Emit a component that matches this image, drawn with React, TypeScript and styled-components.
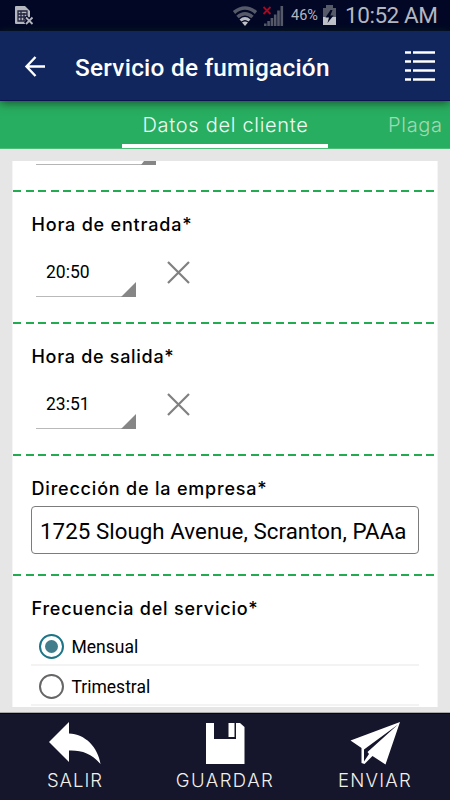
import React from "react";
import styled, { createGlobalStyle } from "styled-components";

const Global = createGlobalStyle`
  * { box-sizing: border-box; }
  body { margin: 0; background: #e6e6e6; overflow: hidden; }
  svg { display: block; flex: none; }
`;

const ui = `Roboto, "Liberation Sans", sans-serif`;
const brand = `Inter, Lato, sans-serif`;

const Screen = styled.div`
  width: 450px;
  height: 800px;
  display: flex;
  flex-direction: column;
  overflow: hidden;
  background: #e6e6e6;
  font-family: ${ui};
  color: #000;
`;

const StatusBar = styled.header`
  height: 31px;
  flex: none;
  display: flex;
  align-items: center;
  padding: 0 12px 0 14px;
  background: #010724;
  color: #b5b7c0;
`;

const Spacer = styled.div`
  flex: 1;
`;

const Percent = styled.span`
  width: 31px;
  margin-left: 7px;
  font-size: 14.5px;
  line-height: 33px;
  white-space: nowrap;
`;

const Clock = styled.span`
  width: 93px;
  margin-left: 8px;
  font-size: 22.5px;
  line-height: 35px;
  letter-spacing: -0.45px;
  white-space: nowrap;
`;

const SignalIcon = styled.svg`
  margin-left: 5px;
`;

const AppBar = styled.div`
  position: relative;
  z-index: 1;
  height: 70px;
  flex: none;
  display: flex;
  align-items: center;
  padding: 0 15px 0 24px;
  background: #11265d;
  border-bottom: 1px solid #0b1450;
  box-shadow: 0 2px 9px rgba(20, 50, 30, 0.75);
  color: #fff;
`;

const Title = styled.h1`
  flex: 1;
  margin: 4px 0 0 29px;
  font-size: 24.4px;
  line-height: 30px;
  font-weight: 500;
  letter-spacing: 0.23px;
  white-space: nowrap;
`;

const Tabs = styled.nav`
  height: 48px;
  flex: none;
  display: flex;
  padding-left: 122px;
  background: #28ae60;
  border-bottom: 1px solid #4dbb7a;
  overflow: hidden;
`;

const Tab = styled.button<{ $active?: boolean }>`
  flex: none;
  height: 47px;
  width: ${(p) => (p.$active ? "206px" : "83px")};
  margin-left: ${(p) => (p.$active ? "0" : "39px")};
  padding: 6px 0 0 ${(p) => (p.$active ? "20.5px" : "21px")};
  border: 0;
  border-bottom: 4px solid ${(p) => (p.$active ? "#fff" : "transparent")};
  background: none;
  color: ${(p) => (p.$active ? "#f0faf3" : "#9edab6")};
  font: 300 20px/37px ${brand};
  letter-spacing: 0.7px;
  text-align: left;
  white-space: nowrap;
`;

const Body = styled.main`
  flex: 1;
  min-height: 0;
  padding: 12px 12px 6px;
  border-bottom: 1px solid #a9a9a9;
`;

const Card = styled.div`
  height: 546px;
  padding: 0 1px;
  overflow: hidden;
  background: #fff;
  border-left: 1px solid #f5f5f5;
  border-right: 1px solid #f5f5f5;
`;

const Field = styled.section<{ $height: number }>`
  height: ${(p) => p.$height}px;
  padding: 0 17px;
`;

const Dashes = styled.div`
  height: 2px;
  width: 421px;
  margin-left: -1px;
  background: repeating-linear-gradient(90deg, #22ab50 0 8px, transparent 8px 12.52px);
`;

const Label = styled.h2<{ $spacing: number }>`
  margin: 0;
  padding: 20px 0 0 0.5px;
  font: 500 18px/25px ${brand};
  letter-spacing: ${(p) => p.$spacing}px;
  white-space: nowrap;
`;

const TimeRow = styled.div`
  display: flex;
  align-items: flex-start;
  padding: 14px 0 0 5px;
`;

const Spinner = styled.div`
  width: 100px;
  height: 46px;
  display: flex;
  justify-content: space-between;
  align-items: flex-end;
  border-bottom: 1px solid #b9b9b9;
  padding-left: 10px;
  font-size: 17.5px;
  line-height: 48px;
`;

const Corner = styled.svg`
  margin-bottom: -1px;
`;

const ClearButton = styled.button`
  margin: 9px 0 0 30px;
  padding: 0;
  border: 0;
  background: none;
`;

const AddressBox = styled.div`
  height: 48px;
  margin-top: 5px;
  padding-left: 8px;
  border: 1px solid #7c7c7c;
  border-radius: 4px;
  font-size: 22.3px;
  line-height: 49px;
  letter-spacing: 0.05px;
  white-space: nowrap;
`;

const Options = styled.div`
  padding-top: 5px;
`;

const Option = styled.div`
  height: 40px;
  display: flex;
  align-items: center;
  gap: 7.5px;
  padding: 3px 0 0 8px;
  border-bottom: 2px solid #f3f3f3;
  font-size: 17.5px;
`;

const Radio = styled.span<{ $on?: boolean }>`
  width: 25px;
  height: 25px;
  display: grid;
  place-items: center;
  border: 2.500px solid ${(p) => (p.$on ? "#1c7486" : "#666")};
  border-radius: 50%;
  &::after {
    content: "";
    width: 13px;
    height: 13px;
    border-radius: 50%;
    background: ${(p) => (p.$on ? "#417d8b" : "transparent")};
  }
`;

const Footer = styled.footer`
  height: 87px;
  flex: none;
  display: grid;
  grid-template-columns: repeat(3, 150px);
  background: #15152b;
  border-top: 1px solid #05051a;
`;

const Action = styled.button<{ $spacing: number }>`
  display: flex;
  flex-direction: column;
  align-items: center;
  padding: 7px 0 0;
  border: 0;
  background: none;
  color: #f0f0ea;
  font: 300 18.5px/26px ${brand};
  letter-spacing: ${(p) => p.$spacing}px;
`;

const PartialSpinner = styled.div`
  width: 120px;
  height: 4px;
  margin: 0 0 25px 22px;
  border-bottom: 1px solid #b5b5b5;
  display: flex;
  justify-content: flex-end;
`;

function TimeField({ label, value, spacing }: { label: string; value: string; spacing: number }) {
  return (
    <>
      <Dashes />
      <Field $height={130}>
        <Label $spacing={spacing}>{label}</Label>
        <TimeRow>
          <Spinner>
            {value}
            <Corner width="15" height="15"><path d="M15 0v15H0z" fill="#868686" /></Corner>
          </Spinner>
          <ClearButton aria-label="Borrar">
            <svg width="25" height="25" stroke="#808080" strokeWidth="2.2">
              <path d="M2 2 23 23M23 2 2 23" />
            </svg>
          </ClearButton>
        </TimeRow>
      </Field>
    </>
  );
}

export default function App() {
  return (
    <>
      <Global />
      <Screen>
        <StatusBar>
          <svg width="21" height="21" viewBox="0 0 21 21">
            <path d="M2 1h9l5 5v8l-3 5H2q-1 0-1-1V2q0-1 1-1z" fill="#b5b7c0" />
            <path d="M4 6h9v10H4zM4 9h9M4 12h9M7 6v10M10 8v8" fill="none" stroke="#20243d" strokeWidth="1.3" />
            <path d="m11.5 12 7 7m0-7-7 7" stroke="#010724" strokeWidth="4" />
            <path d="m12 12.5 6.5 6.5m0-6.5-6.5 6.5" stroke="#b5b7c0" strokeWidth="1.8" />
          </svg>
          <Spacer />
          <svg width="25" height="22" viewBox="0 0 25 22">
            <g fill="none" stroke="#555968" strokeWidth="3.6">
              <path d="M2 7.5Q13-1.5 24 7.5" />
              <path d="M5.5 12Q13 5.5 20.5 12" />
            </g>
            <path d="M8.5 15.5q4.500-4 9 0" fill="none" stroke="#b9bbc3" strokeWidth="3" />
            <path d="m10 17.5q3-2 6 0l-3 3.5z" fill="#c2c4cb" />
          </svg>
          <SignalIcon width="22" height="22" viewBox="0 0 22 22">
            <path d="M2 21v-2.5h2.6V21zM5.300 21v-5h2.600v5zM8.600 21v-8h2.600v8zM11.900 21V9.500h2.600V21zM15.200 21V5.500h2.600V21zM18.500 21V1h2.600v20z" fill="#555968" />
            <path d="m1.5 2 7 7m0-7-7 7" stroke="#a90820" strokeWidth="1.8" />
          </SignalIcon>
          <Percent>46%</Percent>
          <svg width="15" height="21" viewBox="0 0 15 21">
            <path d="M4 0h7v3h3v17H1V3h3z" fill="#555968" />
            <path d="M1 12h13v8H1z" fill="#c0c2c9" />
            <path d="M8.5 5 3.5 12.5h3.500L5.500 18l6-7.500H8.300L10.500 5z" fill="#010724" />
          </svg>
          <Clock>10:52 AM</Clock>
        </StatusBar>

        <AppBar>
          <svg width="22" height="22" viewBox="0 0 22 22" fill="none" stroke="#fff" strokeWidth="2.4">
            <path d="M21 11.5H3M11.5 2 2.5 11.5l9 9.5" />
          </svg>
          <Title>Servicio de fumigación</Title>
          <svg width="30" height="32" viewBox="0 0 30 32" fill="none" stroke="#fff" strokeWidth="2.6">
            <path d="M0 2.500h6M8 2.500h22M0 11.500h6M8 11.500h22M0 20.500h6M8 20.500h22M0 29.500h6M8 29.500h22" />
          </svg>
        </AppBar>

        <Tabs>
          <Tab $active>Datos del cliente</Tab>
          <Tab>Plaga</Tab>
        </Tabs>

        <Body>
          <Card>
            <PartialSpinner>
              <svg width="15" height="4"><path d="M3 0h12v4H0z" fill="#868686" /></svg>
            </PartialSpinner>
            <TimeField label="Hora de entrada*" value="20:50" spacing={0.8} />
            <TimeField label="Hora de salida*" value="23:51" spacing={0.7} />
            <Dashes />
            <Field $height={118}>
              <Label $spacing={0.8}>Dirección de la empresa*</Label>
              <AddressBox>1725 Slough Avenue, Scranton, PAAa</AddressBox>
            </Field>
            <Dashes />
            <Field $height={140}>
              <Label $spacing={0.77}>Frecuencia del servicio*</Label>
              <Options>
                <Option><Radio $on />Mensual</Option>
                <Option><Radio />Trimestral</Option>
              </Options>
            </Field>
          </Card>
        </Body>

        <Footer>
          <Action $spacing={1}>
            <svg width="56" height="46" viewBox="0 0 56 46">
              <path d="M2 21 22 1v11.500C38 13 51 26 53.500 43 44 32 34 29 22 29.500v11.500z" fill="#fff" />
            </svg>
            SALIR
          </Action>
          <Action $spacing={1.5}>
            <svg width="42" height="46" viewBox="0 0 42 46">
              <path d="M2 2h8v16h22V2h4l4.500 4v37H2zM24.500 2h6v14h-6z" fill="#fff" />
            </svg>
            GUARDAR
          </Action>
          <Action $spacing={1.2}>
            <svg width="52" height="46" viewBox="0 0 52 46">
              <path d="M51 1 1.500 19.500 12.500 27v15l3 1L23.500 35l13 8.500z" fill="#fff" />
              <path d="M49 3.500 15 28.500v12L20 33l-1.500-2z" fill="#15152b" />
            </svg>
            ENVIAR
          </Action>
        </Footer>
      </Screen>
    </>
  );
}
